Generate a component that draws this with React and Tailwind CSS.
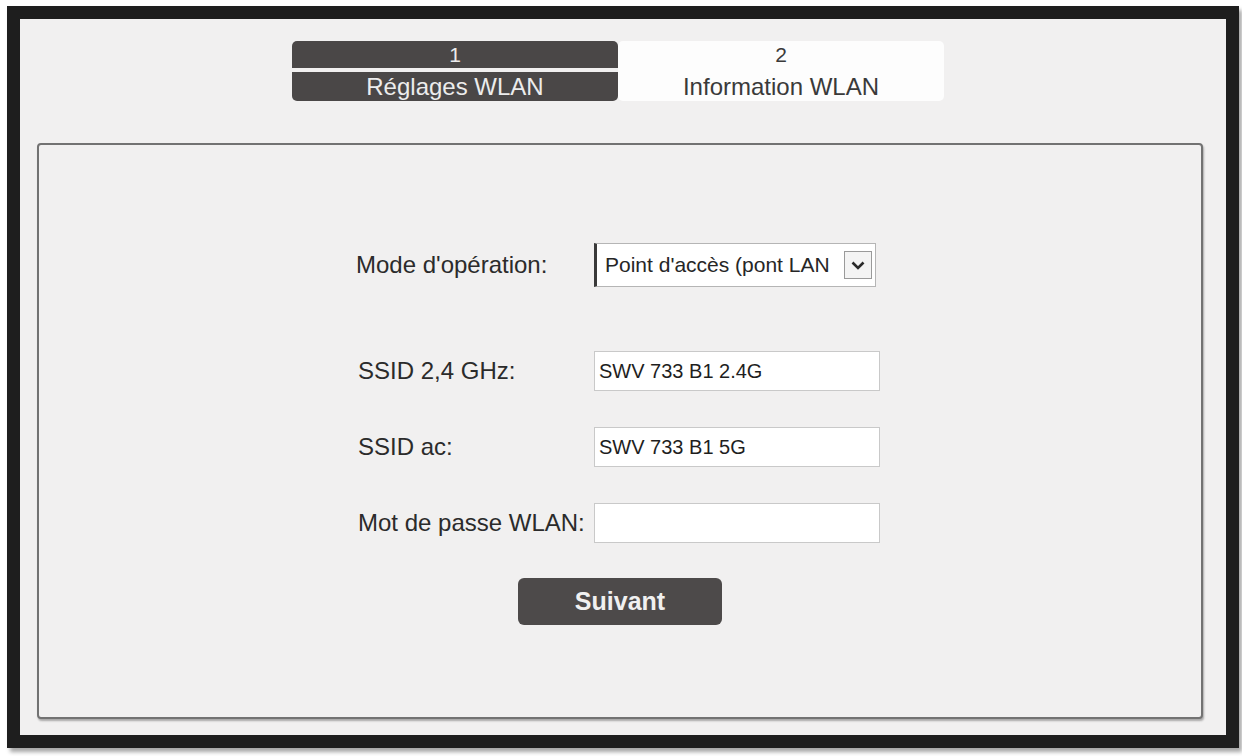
import { useState } from 'react'

const FONT = { fontFamily: '"Liberation Sans", Arial, sans-serif' }

function StepTab({ num, label, active }) {
  const bar = active
    ? 'bg-[#4a4747] text-[#ececec]'
    : 'bg-[#fdfdfd] text-[#3a3a3a]'
  return (
    <div className="flex flex-col w-[326px]">
      <div className={`h-[27px] flex items-center justify-center text-[21px] leading-none rounded-t-[5px] ${bar}`}>
        {num}
      </div>
      <div className={`h-[4px] ${active ? 'bg-[#f1f0f0]' : 'bg-[#fdfdfd]'}`} />
      <div className={`h-[29px] flex items-center justify-center text-[24px] leading-none rounded-b-[5px] ${bar}`}>
        {label}
      </div>
    </div>
  )
}

function Field({ label, value, onChange }) {
  return (
    <>
      <label className="pl-[2px] text-[24px] text-[#2b2b2b] leading-none whitespace-nowrap">{label}</label>
      <input
        type="text"
        value={value}
        onChange={e => onChange(e.target.value)}
        className="w-[286px] h-[40px] px-[4px] bg-white border border-[#c9c9c9] text-[20px] text-[#1e1e1e] outline-none"
      />
    </>
  )
}

export default function App() {
  const [ssid24, setSsid24] = useState('SWV 733 B1 2.4G')
  const [ssid5, setSsid5] = useState('SWV 733 B1 5G')
  const [pass, setPass] = useState('')

  return (
    <div className="w-[1242px] h-[756px] bg-white pl-[7px] pt-[6px]" style={FONT}>
      <div className="w-[1232px] h-[742px] border-[13px] border-[#1e1e1e] bg-[#f1f0f0] flex flex-col shadow-[3px_4px_4px_rgba(0,0,0,0.35)]">
        {/* step tabs */}
        <div className="flex pl-[272px] pt-[22px]">
          <StepTab num="1" label="Réglages WLAN" active />
          <StepTab num="2" label="Information WLAN" />
        </div>

        {/* form panel */}
        <div className="ml-[17px] mt-[42px] w-[1166px] h-[576px] border-2 border-[#727272] rounded-[4px] shadow-[1px_2px_2px_rgba(0,0,0,0.3)] bg-[#f1f0f0] flex flex-col items-center pt-[98px]">
          <div className="grid grid-cols-[238px_286px] items-center mr-[4px]">
            <label className="text-[24px] text-[#2b2b2b] leading-none whitespace-nowrap">Mode d'opération:</label>
            <div className="w-[282px] h-[44px] bg-white border border-[#b5b5b5] border-l-[3px] border-l-[#3a3a3a] flex items-center pl-[8px] pr-[3px] gap-[5px]">
              <span className="flex-1 text-[21px] text-[#262626] whitespace-nowrap">Point d'accès (pont LAN</span>
              <span className="w-[28px] h-[28px] shrink-0 border border-[#9a9a9a] bg-[#f4f4f4] flex items-center justify-center">
                <svg width="16" height="11" viewBox="0 0 16 11">
                  <path d="M2.5 2.5 L8 8 L13.5 2.5" fill="none" stroke="#2a2a2a" strokeWidth="2.6" />
                </svg>
              </span>
            </div>
          </div>

          <div className="grid grid-cols-[238px_286px] items-center gap-y-[36px] mt-[64px] mr-[4px]">
            <Field label="SSID 2,4 GHz:" value={ssid24} onChange={setSsid24} />
            <Field label="SSID ac:" value={ssid5} onChange={setSsid5} />
            <Field label="Mot de passe WLAN:" value={pass} onChange={setPass} />
          </div>

          <button className="mt-[35px] w-[204px] h-[47px] rounded-[6px] bg-[#4d4a4a] text-[#f0f0f0] text-[25px] font-bold">
            Suivant
          </button>
        </div>
      </div>
    </div>
  )
}
